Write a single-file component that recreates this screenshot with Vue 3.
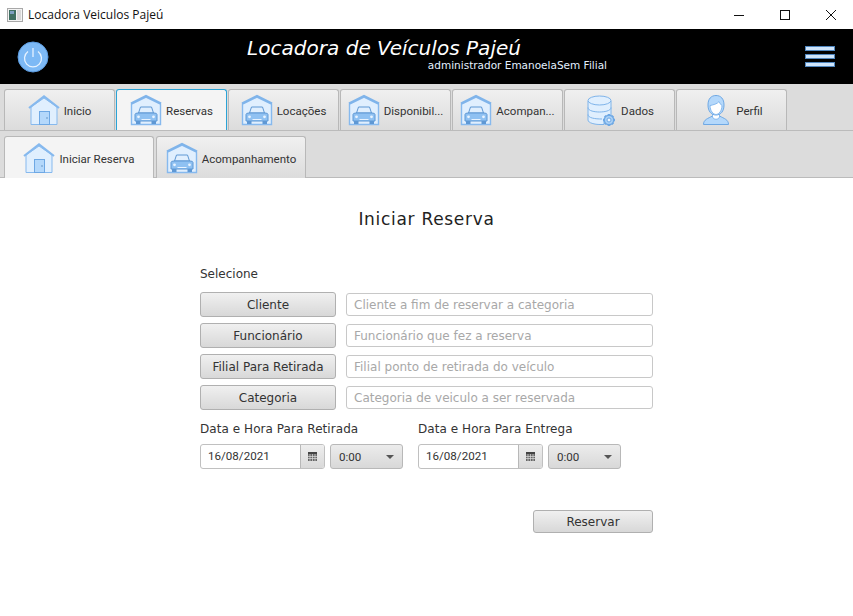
<script setup>
const mainTabs = [
  { label: 'Inicio', icon: 'house' },
  { label: 'Reservas', icon: 'garage', active: true },
  { label: 'Locações', icon: 'garage' },
  { label: 'Disponibil...', icon: 'garage' },
  { label: 'Acompan...', icon: 'garage' },
  { label: 'Dados', icon: 'db' },
  { label: 'Perfil', icon: 'user' },
]
const subTabs = [
  { label: 'Iniciar Reserva', icon: 'house', current: true },
  { label: 'Acompanhamento', icon: 'garage' },
]
const fields = [
  { btn: 'Cliente', hint: 'Cliente a fim de reservar a categoria' },
  { btn: 'Funcionário', hint: 'Funcionário que fez a reserva' },
  { btn: 'Filial Para Retirada', hint: 'Filial ponto de retirada do veículo' },
  { btn: 'Categoria', hint: 'Categoria de veiculo a ser reservada' },
]
const dates = ['Data e Hora Para Retirada', 'Data e Hora Para Entrega']
</script>

<template>
  <div class="window">
    <div class="titlebar">
      <svg class="app-icon" width="16" height="16" viewBox="0 0 16 16">
        <rect x="0.5" y="1.5" width="15" height="13" fill="#f4f4f4" stroke="#a8a8a8" />
        <rect x="2" y="3" width="7" height="10" fill="#3f6f62" />
        <rect x="3" y="4" width="4" height="3" fill="#7d9fc0" />
        <rect x="10" y="3" width="4" height="10" fill="#d8d8d8" />
      </svg>
      <span class="app-title">Locadora Veiculos Pajeú</span>
      <div class="win-buttons">
        <svg width="12" height="12" viewBox="0 0 12 12"><path d="M1 6.5H11" stroke="#111" fill="none" /></svg>
        <svg width="12" height="12" viewBox="0 0 12 12"><rect x="1.5" y="1.5" width="9" height="9" stroke="#111" fill="none" /></svg>
        <svg width="12" height="12" viewBox="0 0 12 12"><path d="M1 1L11 11M11 1L1 11" stroke="#111" fill="none" /></svg>
      </div>
    </div>

    <header class="banner">
      <svg class="power" width="32" height="32" viewBox="0 0 32 32">
        <circle cx="16" cy="16" r="15" fill="#7db9f5" stroke="#5b9be0" />
        <path d="M11 10.500a8.500 8.500 0 1 0 10 0" fill="none" stroke="#e6f2ff" stroke-width="1.300" />
        <path d="M16 7V16" fill="none" stroke="#e6f2ff" stroke-width="1.300" />
      </svg>
      <div class="banner-text">
        <div class="brand">Locadora de Veículos Pajeú</div>
        <div class="user">administrador EmanoelaSem Filial</div>
      </div>
      <div class="menu"><i></i><i></i><i></i></div>
    </header>

    <nav v-for="(row, r) in [mainTabs, subTabs]" :key="r" class="tabs" :class="r === 0 ? 'main-tabs' : 'sub-tabs'">
      <div v-for="t in row" :key="t.label" class="tab" :class="{ active: t.active, current: t.current }">
        <svg class="tab-icon" width="32" height="32" viewBox="0 0 32 32">
          <template v-if="t.icon === 'house'">
            <path d="M3 13V30.500H29V13L16 4Z" fill="#e0effe" stroke="#86b9ee" />
            <path d="M1 14L16 2.500L31 14" fill="none" stroke="#86b9ee" stroke-width="2.200" />
            <rect x="11.500" y="17.500" width="10" height="13" fill="#b4d8fb" stroke="#6ea8e4" />
            <circle cx="19" cy="24" r="0.700" fill="#4d7fb5" />
          </template>
          <template v-else-if="t.icon === 'garage'">
            <path d="M1.500 10V30.500H30.500V10L16 3Z" fill="#e0effe" stroke="#86b9ee" stroke-width="1.400" />
            <path d="M1 9.500L16 2L31 9.500" fill="none" stroke="#7fb4ea" stroke-width="2.200" />
            <path d="M8.500 19L10.500 13H21.500L23.500 19Z" fill="#e0effe" stroke="#5f98d4" />
            <path d="M5 20.500Q5 19 8 19H24Q27 19 27 20.500V27H5Z" fill="#8fc1f2" stroke="#5f98d4" />
            <rect x="6" y="27" width="4.500" height="3" fill="#5f98d4" />
            <rect x="21.500" y="27" width="4.500" height="3" fill="#5f98d4" />
            <path d="M11.500 25.500H20.500" stroke="#e8f3ff" />
            <circle cx="8.500" cy="22.800" r="1.400" fill="#e8f3ff" />
            <circle cx="23.500" cy="22.800" r="1.400" fill="#e8f3ff" />
          </template>
          <template v-else-if="t.icon === 'db'">
            <path d="M3 7V26C3 29 10 30.500 15 30.500H19V25H26V7Z" fill="#e0effe" stroke="#7fb4ea" />
            <ellipse cx="14.500" cy="6.500" rx="11.500" ry="4.500" fill="#e0effe" stroke="#7fb4ea" />
            <path d="M3 13.500C3 17 10 18 14.500 18S26 17 26 13.500M3 20.500C3 24 10 25 17 25" fill="none" stroke="#7fb4ea" />
            <path d="M24 20V32M18 26H30M19.800 21.800L28.200 30.200M28.200 21.800L19.800 30.200" stroke="#6ea8e4" stroke-width="2.500" />
            <circle cx="24" cy="26" r="4.700" fill="#a9d0f6" stroke="#6ea8e4" stroke-width="1.400" />
            <circle cx="24" cy="26" r="2" fill="#f0f7ff" stroke="#6ea8e4" />
          </template>
          <template v-else>
            <path d="M3.500 30.500C3.500 25.500 8 24.500 12.500 22H19.500C24 24.500 28.500 25.500 28.500 30.500Z" fill="#b4d8fb" stroke="#6ea8e4" />
            <path d="M12.500 19V23C13.500 26 18.500 26 19.500 23V19Z" fill="#fff" stroke="#86b9ee" />
            <path d="M8 11C8 5 11 1.500 16 1.500S24 5 24 11C24 17 21 21 16 21S8 17 8 11Z" fill="#b4d8fb" stroke="#6ea8e4" />
            <path d="M10 11.500C12.500 11 17.500 10 19 7.500C20 9.500 21 11 22 11.500C22 16.500 19 20.500 16 20.500S10 16.500 10 11.500Z" fill="#fff" stroke="#86b9ee" />
          </template>
        </svg>
        <span class="tab-label">{{ t.label }}</span>
      </div>
    </nav>

    <main class="content">
      <h1 class="heading">Iniciar Reserva</h1>
      <div class="form">
        <div class="select-label">Selecione</div>
        <div class="rows">
          <div v-for="f in fields" :key="f.btn" class="row">
            <button class="btn pick">{{ f.btn }}</button>
            <input class="field" :placeholder="f.hint" />
          </div>
        </div>
        <div class="dates">
          <div v-for="d in dates" :key="d" class="date-group">
            <div class="date-label">{{ d }}</div>
            <div class="date-controls">
              <div class="date-picker">
                <span class="date-value">16/08/2021</span>
                <span class="cal">
                  <svg width="9" height="9" viewBox="0 0 9 9">
                    <rect width="9" height="2" fill="#444" />
                    <rect y="2" width="9" height="7" fill="#666" />
                    <path d="M0 4.500H9M0 6.500H9M2 2V9M4.500 2V9M7 2V9" stroke="#ddd" stroke-width="0.700" />
                  </svg>
                </span>
              </div>
              <div class="time-box">
                <span>0:00</span>
                <i class="arrow"></i>
              </div>
            </div>
          </div>
        </div>
        <div class="actions">
          <button class="btn reserve">Reservar</button>
        </div>
      </div>
    </main>
  </div>
</template>

<style>
html, body {
  margin: 0;
  background: #fff;
}
</style>

<style scoped>
.window {
  width: 853px;
  height: 616px;
  overflow: hidden;
  display: flex;
  flex-direction: column;
  background: #fff;
  font-family: "DejaVu Sans", sans-serif;
  color: #333;
}
.titlebar {
  height: 29px;
  display: flex;
  align-items: center;
  padding-left: 7px;
  background: #fff;
  flex: none;
}
.app-title {
  margin-left: 5px;
  font: 12px "Open Sans", sans-serif;
  color: #111;
}
.win-buttons {
  margin-left: auto;
  display: flex;
  gap: 34px;
  padding-right: 16px;
}
.banner {
  position: relative;
  height: 55px;
  background: #000;
  flex: none;
  display: flex;
  align-items: center;
  padding: 0 18px 0 17px;
}
.power {
  margin-top: 1px;
}
.banner-text {
  position: absolute;
  left: 247px;
  top: 8px;
  width: 360px;
}
.brand {
  font: italic 20px/22px "DejaVu Sans", sans-serif;
  color: #fff;
  letter-spacing: 0.03px;
}
.user {
  font: 10.500px/12px "DejaVu Sans", sans-serif;
  color: #e3f0ff;
  text-align: right;
}
.menu {
  margin-left: auto;
  display: flex;
  flex-direction: column;
  gap: 3px;
  width: 30px;
}
.menu i {
  display: block;
  height: 5px;
  background: #cfe5fb;
  border: 1px solid #4f86bf;
  box-sizing: border-box;
}
.tabs {
  display: flex;
  background: #dcdcdc;
  flex: none;
  box-sizing: border-box;
}
.main-tabs {
  height: 47px;
  padding: 5px 0 0 4px;
  gap: 1px;
  border-bottom: 1px solid #bbb;
}
.sub-tabs {
  height: 47px;
  padding: 5px 0 0 4px;
  gap: 2px;
  border-bottom: 1px solid #bbb;
}
.tab {
  box-sizing: border-box;
  width: 111px;
  height: 41px;
  display: flex;
  align-items: center;
  justify-content: center;
  gap: 4px;
  border: 1px solid #b8b8b8;
  border-bottom: none;
  border-radius: 3px 3px 0 0;
  background: linear-gradient(#f0f0f0, #dcdcdc);
  font: 11.500px Roboto, sans-serif;
  color: #333;
}
.tab-label {
  margin-top: 2px;
}
.tab.active {
  background: #f4f4f4;
  border: 1px solid #2ba3d6;
  border-bottom: none;
}
.sub-tabs .tab {
  width: 150px;
  height: 42px;
}
.tab.current {
  background: #f4f4f4;
}
.content {
  flex: 1;
  display: flex;
  flex-direction: column;
  align-items: center;
}
.heading {
  margin: 30px 0 0;
  font: 400 17px/22px "DejaVu Sans", sans-serif;
  color: #222;
  letter-spacing: 0.7px;
}
.form {
  width: 453px;
  margin-top: 37px;
  font-size: 12px;
}
.select-label {
  line-height: 15px;
}
.rows {
  margin-top: 10px;
  display: flex;
  flex-direction: column;
  gap: 6px;
}
.row {
  display: flex;
  gap: 10px;
  align-items: center;
}
.btn {
  box-sizing: border-box;
  height: 25px;
  border: 1px solid #b0b0b0;
  border-radius: 3px;
  background: linear-gradient(#f0f0f0, #d8d8d8);
  font: 12px "DejaVu Sans", sans-serif;
  color: #333;
  padding: 0;
}
.pick {
  width: 136px;
  flex: none;
}
.field {
  box-sizing: border-box;
  flex: 1;
  min-width: 0;
  height: 23px;
  border: 1px solid #c8c8c8;
  border-radius: 3px;
  padding: 0 7px;
  background: #fff;
  font: 12px "DejaVu Sans", sans-serif;
  outline: none;
}
.field::placeholder {
  color: #a8a8a8;
  opacity: 1;
}
.dates {
  display: flex;
  gap: 15px;
  margin-top: 12px;
}
.date-group {
  width: 203px;
}
.date-label {
  line-height: 15px;
  letter-spacing: 0.06px;
}
.date-controls {
  margin-top: 7px;
  display: flex;
  gap: 5px;
}
.date-picker {
  box-sizing: border-box;
  width: 125px;
  height: 25px;
  display: flex;
  border: 1px solid #c0c0c0;
  border-radius: 3px;
  overflow: hidden;
  background: #fff;
}
.date-value {
  flex: 1;
  padding-left: 7px;
  font: 11.600px/23px Roboto, sans-serif;
}
.cal {
  width: 23px;
  display: flex;
  align-items: center;
  justify-content: center;
  background: linear-gradient(#eee, #d9d9d9);
  border-left: 1px solid #b8b8b8;
}
.time-box {
  box-sizing: border-box;
  width: 73px;
  height: 25px;
  display: flex;
  align-items: center;
  justify-content: space-between;
  padding: 0 8px;
  border: 1px solid #b8b8b8;
  border-radius: 3px;
  background: linear-gradient(#ececec, #d8d8d8);
  font: 11.600px Roboto, sans-serif;
}
.arrow {
  width: 0;
  height: 0;
  border-left: 4px solid transparent;
  border-right: 4px solid transparent;
  border-top: 4px solid #555;
}
.actions {
  display: flex;
  justify-content: flex-end;
  margin-top: 41px;
}
.reserve {
  width: 120px;
  height: 23px;
}
</style>
